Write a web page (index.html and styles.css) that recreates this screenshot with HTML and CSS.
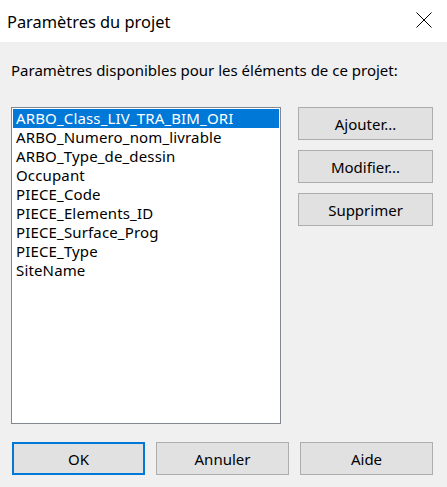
FILE: index.html
```html
<!DOCTYPE html>
<html lang="fr">
<head>
<meta charset="utf-8">
<title>Paramètres du projet</title>
<link rel="stylesheet" href="styles.css">
</head>
<body>
<div class="dialog">
  <div class="titlebar">
    <span class="title">Paramètres du projet</span>
    <svg class="close" width="16" height="16" viewBox="0 0 16 16"><path d="M0.5 0.5 L15.5 15.5 M15.5 0.5 L0.5 15.5" stroke="#000" stroke-width="1" fill="none"/></svg>
  </div>
  <div class="content">
    <div class="label">Paramètres disponibles pour les éléments de ce projet:</div>
    <div class="main">
      <div class="listbox">
        <div class="item selected">ARBO_Class_LIV_TRA_BIM_ORI</div>
        <div class="item">ARBO_Numero_nom_livrable</div>
        <div class="item">ARBO_Type_de_dessin</div>
        <div class="item">Occupant</div>
        <div class="item">PIECE_Code</div>
        <div class="item">PIECE_Elements_ID</div>
        <div class="item">PIECE_Surface_Prog</div>
        <div class="item">PIECE_Type</div>
        <div class="item">SiteName</div>
      </div>
      <div class="side">
        <button class="btn side-btn">Ajouter...</button>
        <button class="btn side-btn">Modifier...</button>
        <button class="btn side-btn">Supprimer</button>
      </div>
    </div>
    <div class="footer">
      <button class="btn foot-btn default">OK</button>
      <button class="btn foot-btn">Annuler</button>
      <button class="btn foot-btn">Aide</button>
    </div>
  </div>
</div>
</body>
</html>
```
FILE: styles.css
```css
html, body {
  margin: 0;
  padding: 0;
}
body {
  width: 447px;
  height: 487px;
  overflow: hidden;
  font-family: "Noto Sans", "Open Sans", sans-serif;
  color: #000;
  background: #f0f0f0;
}
.dialog {
  width: 447px;
  height: 487px;
  display: flex;
  flex-direction: column;
}
.titlebar {
  height: 42px;
  background: #fff;
  display: flex;
  align-items: center;
  justify-content: space-between;
  padding: 0 15px 0 7px;
  box-sizing: border-box;
}
.title {
  font-size: 16.4px;
}
.close {
  display: block;
  margin-top: -3px;
}
.content {
  flex: 1;
  background: #f0f0f0;
  padding: 0 14px 0 11px;
}
.label {
  font-size: 15px;
  height: 20px;
  line-height: 20px;
  margin-top: 18px;
}
.main {
  display: flex;
  margin-top: 27px;
}
.listbox {
  width: 270px;
  height: 317px;
  box-sizing: border-box;
  border: 1px solid #828790;
  background: #fff;
  padding: 1px;
}
.item {
  height: 19px;
  line-height: 19px;
  font-size: 15px;
  letter-spacing: 0.15px;
  padding-left: 3px;
  white-space: nowrap;
}
.item.selected {
  background: #0078d7;
  color: #fff;
}
.side {
  margin-left: 17px;
  display: flex;
  flex-direction: column;
  gap: 10px;
}
.btn {
  font-family: inherit;
  font-size: 15px;
  color: #000;
  background: #e1e1e1;
  border: 1px solid #adadad;
  height: 33px;
  padding: 0;
  margin: 0;
  box-sizing: border-box;
}
.side-btn {
  width: 135px;
}
.footer {
  display: flex;
  gap: 11px;
  margin-top: 18px;
  padding-left: 1px;
}
.foot-btn {
  width: 133px;
}
.btn.default {
  border: 2px solid #0078d7;
}
```
